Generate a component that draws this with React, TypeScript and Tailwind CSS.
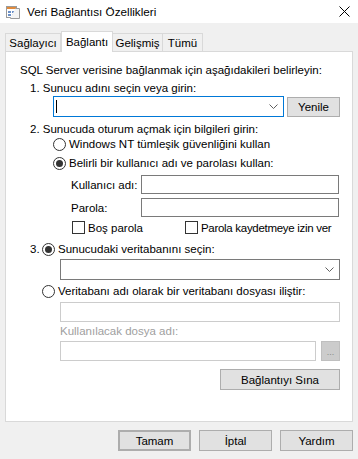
import React from "react";

const font = { fontFamily: '"Liberation Sans", Arial, sans-serif' };

function Chevron() {
  return (
    <svg width="9" height="5" viewBox="0 0 9 5" className="shrink-0">
      <path d="M0.5 0.5 L4.5 4.5 L8.5 0.5" fill="none" stroke="#606060" strokeWidth="1" />
    </svg>
  );
}

function Radio({ checked }: { checked?: boolean }) {
  return (
    <span className="w-[13px] h-[13px] rounded-full border border-[#333333] bg-white flex items-center justify-center shrink-0">
      {checked && <span className="w-[7px] h-[7px] rounded-full bg-[#333333]" />}
    </span>
  );
}

function Check() {
  return <span className="w-[13px] h-[13px] border border-[#333333] bg-white shrink-0" />;
}

function Btn({ children, className = "" }: { children: React.ReactNode; className?: string }) {
  return (
    <div
      className={
        "bg-[#e1e1e1] border border-[#adadad] flex items-center justify-center text-black " +
        className
      }
    >
      {children}
    </div>
  );
}

export default function App() {
  return (
    <div className="w-[358px] h-[459px] bg-[#f0f0f0] text-[11.5px] leading-[14px] text-black overflow-hidden" style={font}>
      {/* title bar */}
      <div className="h-[23px] bg-white flex items-center">
        <svg width="14" height="14" viewBox="0 0 14 14" className="ml-[6px]">
          <rect x="0.5" y="1.5" width="10" height="11" fill="#fff" stroke="#9a9a9a" />
          <rect x="1" y="2" width="9" height="2" fill="#e08a3c" />
          <rect x="2" y="6" width="3" height="2" fill="#6a8fc7" />
          <rect x="6" y="6" width="3" height="2" fill="#6a8fc7" />
          <rect x="2" y="9" width="3" height="2" fill="#6a8fc7" />
          <rect x="6" y="9" width="3" height="2" fill="#6a8fc7" />
          <path d="M9.5 3.5 L13.5 3.5 L13.5 13.5 L4.5 13.5 L4.5 12.5" fill="#f4f4f4" stroke="#9a9a9a" />
        </svg>
        <span className="ml-[7px] text-[11.7px]">Veri Bağlantısı Özellikleri</span>
        <svg width="11" height="11" viewBox="0 0 11 11" className="ml-auto mr-[8px]">
          <path d="M0.5 0.5 L10.5 10.5 M10.5 0.5 L0.5 10.5" stroke="#000" strokeWidth="1" />
        </svg>
      </div>

      {/* tabs */}
      <div className="flex items-end h-[20px] mt-[8px] pl-[5px] relative z-10">
        <div className="h-[18px] w-[56px] border border-b-0 border-[#d9d9d9] bg-[#f0f0f0] flex items-center justify-center">
          Sağlayıcı
        </div>
        <div className="h-[21px] w-[52px] -mb-px border border-b-0 border-[#d9d9d9] bg-white flex items-start pt-[3px] justify-center">
          Bağlantı
        </div>
        <div className="h-[18px] w-[50px] border border-b-0 border-l-0 border-[#d9d9d9] bg-[#f0f0f0] flex items-center justify-center">
          Gelişmiş
        </div>
        <div className="h-[18px] w-[40px] border border-b-0 border-l-0 border-[#d9d9d9] bg-[#f0f0f0] flex items-center justify-center">
          Tümü
        </div>
      </div>

      {/* panel */}
      <div className="ml-[5px] w-[348px] h-[371px] border border-[#d9d9d9] bg-white flex flex-col">
        <div className="mt-[11px] ml-[14px]">SQL Server verisine bağlanmak için aşağıdakileri belirleyin:</div>
        <div className="mt-[4px] ml-[24px]">1. Sunucu adını seçin veya girin:</div>
        <div className="mt-[1px] ml-[47px] flex items-center">
          <div className="w-[231px] h-[21px] border border-[#0078d7] flex items-center pl-[2px] pr-[5px]">
            <span className="w-px h-[13px] bg-black" />
            <span className="ml-auto">
              <Chevron />
            </span>
          </div>
          <Btn className="ml-[3px] w-[53px] h-[20px]">Yenile</Btn>
        </div>
        <div className="mt-[5px] ml-[24px]">2. Sunucuda oturum açmak için bilgileri girin:</div>
        <div className="mt-0 ml-[47px] flex items-center gap-[3px] h-[16px]">
          <Radio />
          <span>Windows NT tümleşik güvenliğini kullan</span>
        </div>
        <div className="mt-[3px] ml-[47px] flex items-center gap-[3px] h-[16px]">
          <Radio checked />
          <span>Belirli bir kullanıcı adı ve parolası kullan:</span>
        </div>
        <div className="mt-[4px] ml-[65px] flex items-center h-[19px]">
          <span className="w-[70px]">Kullanıcı adı:</span>
          <div className="w-[198px] h-[19px] border border-[#7a7a7a]" />
        </div>
        <div className="mt-[4px] ml-[65px] flex items-center h-[19px]">
          <span className="w-[70px]">Parola:</span>
          <div className="w-[198px] h-[19px] border border-[#7a7a7a]" />
        </div>
        <div className="mt-[3px] ml-[66px] flex items-center h-[15px]">
          <Check />
          <span className="ml-[3px] w-[97px]">Boş parola</span>
          <Check />
          <span className="ml-[3px] tracking-[-0.3px]">Parola kaydetmeye izin ver</span>
        </div>
        <div className="mt-[6px] ml-[24px] flex items-center h-[16px]">
          <span className="w-[12px]">3.</span>
          <Radio checked />
          <span className="ml-[3px]">Sunucudaki veritabanını seçin:</span>
        </div>
        <div className="mt-[2px] ml-[54px] w-[280px] h-[21px] border border-[#7a7a7a] flex items-center pr-[5px]">
          <span className="ml-auto">
            <Chevron />
          </span>
        </div>
        <div className="mt-[3px] ml-[36px] flex items-center h-[16px]">
          <Radio />
          <span className="ml-[3px]">Veritabanı adı olarak bir veritabanı dosyası iliştir:</span>
        </div>
        <div className="mt-[3px] ml-[54px] w-[280px] h-[20px] border border-[#cccccc]" />
        <div className="mt-[2px] ml-[54px] text-[#a0a0a0]">Kullanılacak dosya adı:</div>
        <div className="mt-[3px] ml-[54px] flex items-start">
          <div className="w-[256px] h-[20px] border border-[#cccccc]" />
          <div className="ml-[5px] w-[19px] h-[20px] bg-[#cccccc] border border-[#bfbfbf] flex items-end justify-center pb-[3px] text-[9px] leading-[9px] text-[#8a8a8a]">
            ...
          </div>
        </div>
        <div className="mt-[8px] flex justify-end pr-[12px]">
          <Btn className="w-[120px] h-[21px]">Bağlantıyı Sına</Btn>
        </div>
      </div>

      {/* bottom buttons */}
      <div className="mt-[8px] flex justify-end gap-[8px] pr-[5px]">
        <Btn className="w-[73px] h-[21px] border-2 border-[#0078d7]">Tamam</Btn>
        <Btn className="w-[73px] h-[21px]">İptal</Btn>
        <Btn className="w-[73px] h-[21px]">Yardım</Btn>
      </div>
    </div>
  );
}
